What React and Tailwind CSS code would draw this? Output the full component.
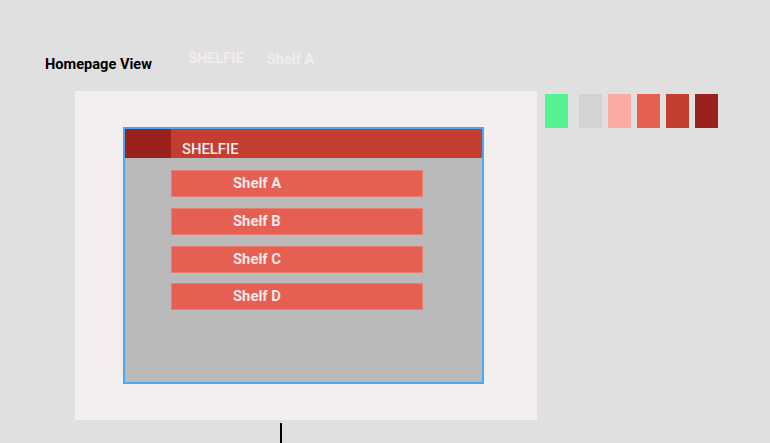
export default function App() {
  const shelves = ["Shelf A", "Shelf B", "Shelf C", "Shelf D"];
  const swatches = ["bg-[#55f293]", "bg-[#d3d3d3]", "bg-[#fcaba2]", "bg-[#e55f53]", "bg-[#c43d31]", "bg-[#9b221c]"];
  return (
    <div className="w-[770px] h-[443px] bg-[#e0e0e0] overflow-hidden flex flex-col" style={{ fontFamily: "Roboto, 'Liberation Sans', sans-serif" }}>
      <div className="flex items-start pl-[45px] pt-[48px] h-[91px]">
        <div className="mt-[7px] text-[14.6px] font-bold text-black leading-[18px]">Homepage View</div>
        <div className="ml-[36px] mt-[1px] text-[14.6px] font-bold text-[#f2ecec] leading-[18px]">SHELFIE</div>
        <div className="ml-[23px] mt-[2px] text-[14.6px] font-bold text-[#f2ecec] leading-[18px]">Shelf A</div>
      </div>
      <div className="flex items-start pl-[75px]">
        <div className="w-[462px] h-[329px] bg-[#f4efef] pl-[48px] pt-[36px]">
          <div className="w-[361px] h-[257px] border-2 border-[#49a9f0] bg-[#bababa] flex flex-col">
            <div className="h-[29px] bg-[#c43d31] flex">
              <div className="w-[46px] h-full bg-[#9b221c]"></div>
              <div className="ml-[11px] pt-[11px] text-[14.8px] font-medium text-[#f6ecec] leading-[18px]">SHELFIE</div>
            </div>
            <div className="flex flex-col pl-[46px] pt-[12px] gap-[11px]">
              {shelves.map((s, i) => (
                <div key={s} className={`w-[252px] h-[27px] bg-[#e55f53] border border-[#e87d72] flex items-center pl-[61px] text-[14.8px] font-bold text-[#f6e9e9] ${i === 3 ? "-mt-[1px]" : ""}`}>{s}</div>
              ))}
            </div>
          </div>
        </div>
        <div className="flex ml-[8px] mt-[3px] gap-[6px]">
          {swatches.map((c, i) => (
            <div key={i} className={`w-[23px] h-[34px] ${c} ${i === 1 ? "ml-[5px]" : ""}`}></div>
          ))}
        </div>
      </div>
      <div className="ml-[280px] mt-[3px] w-[2px] h-[20px] bg-black"></div>
    </div>
  );
}
